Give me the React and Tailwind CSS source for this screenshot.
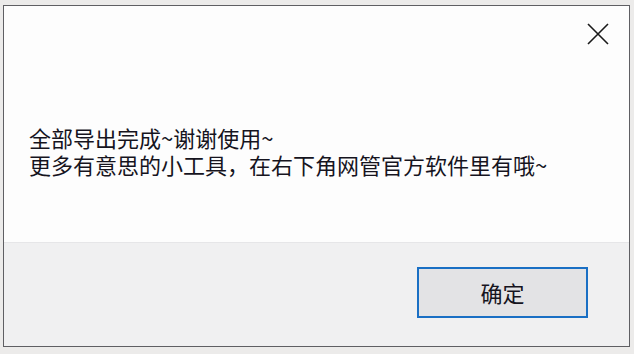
import React from "react";

const CloseIcon = () => (
  <svg width="22" height="22" viewBox="0 0 22 22" fill="none">
    <path d="M1 1L21 21M21 1L1 21" stroke="#1a1a1a" strokeWidth="1.6" />
  </svg>
);

export default function App() {
  return (
    <div
      className="w-[634px] h-[354px] bg-[#ecebea] pt-[5px] pl-[3px] overflow-hidden"
      style={{ fontFamily: '"Noto Sans CJK SC", "Noto Sans", sans-serif' }}
    >
      <div className="w-[627px] h-[342px] border border-[#5f5f63] flex flex-col bg-[#fdfdfd]">
        {/* message area */}
        <div className="h-[237px] relative border-b border-[#e6e6e8]">
          <button className="absolute right-[20px] top-[17px] p-0">
            <CloseIcon />
          </button>
          <div className="pt-[118px] pl-[25px] text-[22px] leading-[27px] text-[#16141e]">
            <p>全部导出完成~谢谢使用~</p>
            <p>更多有意思的小工具，在右下角网管官方软件里有哦~</p>
          </div>
        </div>

        {/* footer */}
        <div className="flex-1 bg-[#f0f0f1] flex justify-end items-start pt-[24px] pr-[41px]">
          <button className="w-[171px] h-[51px] border-2 border-[#1a6fc4] bg-[#e3e3e5] text-[22px] text-[#16141e] flex items-center justify-center">
            确定
          </button>
        </div>
      </div>
    </div>
  );
}
